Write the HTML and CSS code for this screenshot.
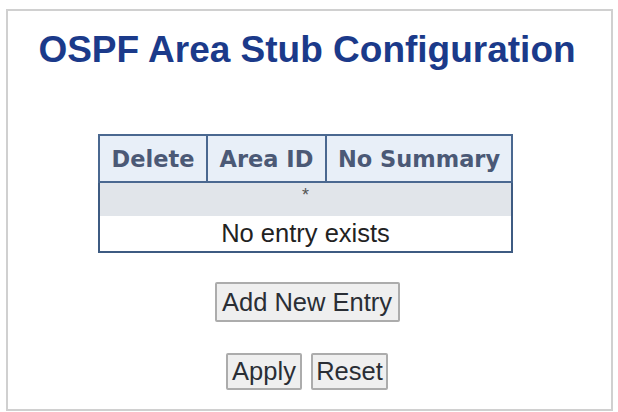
FILE: index.html
```html
<!DOCTYPE html>
<html>
<head>
<meta charset="utf-8">
<link rel="stylesheet" href="styles.css">
</head>
<body>
<div class="frame">
  <h1 class="title">OSPF Area Stub Configuration</h1>
  <table class="config">
    <thead>
      <tr>
        <th class="c-del">Delete</th>
        <th class="c-area">Area ID</th>
        <th class="c-sum">No Summary</th>
      </tr>
    </thead>
    <tbody>
      <tr class="row-star"><td colspan="3">*</td></tr>
      <tr class="row-empty"><td colspan="3">No entry exists</td></tr>
    </tbody>
  </table>
  <div class="actions">
    <button class="btn btn-add">Add New Entry</button>
  </div>
  <div class="actions actions-bottom">
    <button class="btn btn-apply">Apply</button>
    <button class="btn btn-reset">Reset</button>
  </div>
</div>
</body>
</html>
```
FILE: styles.css
```css
html, body {
  margin: 0;
  padding: 0;
  background: #ffffff;
}

body {
  font-family: "Liberation Sans", Arial, sans-serif;
}

.frame {
  box-sizing: border-box;
  margin: 9px 5px 0 6px;
  height: 402px;
  border: 2px solid #d0d0d0;
  display: flex;
  flex-direction: column;
  align-items: center;
  padding-top: 16px;
  padding-right: 5px;
}

.title {
  margin: 0;
  font-size: 37px;
  line-height: 46px;
  font-weight: bold;
  color: #1b3a8a;
}

.config {
  margin-top: 61px;
  margin-right: 3px;
  border-collapse: collapse;
  border: 2px solid #3e5b82;
  width: 415px;
}

.config th {
  height: 45px;
  padding: 0;
  background: #e8eff8;
  border: 2px solid #4a6890;
  font-family: "DejaVu Sans", Verdana, sans-serif;
  font-weight: bold;
  font-size: 22.5px;
  color: #4b5976;
  text-align: center;
}

.c-del { width: 106px; }
.c-area { width: 117px; }

.row-star td {
  height: 33px;
  padding: 0;
  background: #e1e5ea;
  text-align: center;
  font-size: 18px;
  color: #555;
  vertical-align: top;
  line-height: 24px;
}

.row-empty td {
  height: 35px;
  padding: 0;
  background: #ffffff;
  text-align: center;
  font-size: 25.5px;
  color: #222222;
}

.actions {
  display: flex;
  gap: 9px;
  margin-top: 29px;
}

.actions-bottom {
  margin-top: 31px;
}

.btn {
  font-family: "Liberation Sans", Arial, sans-serif;
  font-size: 25.5px;
  color: #2a2e35;
  background: #efefef;
  border: 2px solid #acacac;
  border-radius: 2px;
  padding: 0 5px;
  margin: 0;
}

.btn-add {
  width: 185px;
  height: 40px;
}

.btn-apply {
  width: 76px;
  height: 37px;
  padding: 0;
}

.btn-reset {
  width: 77px;
  height: 37px;
  padding: 0;
}
```
